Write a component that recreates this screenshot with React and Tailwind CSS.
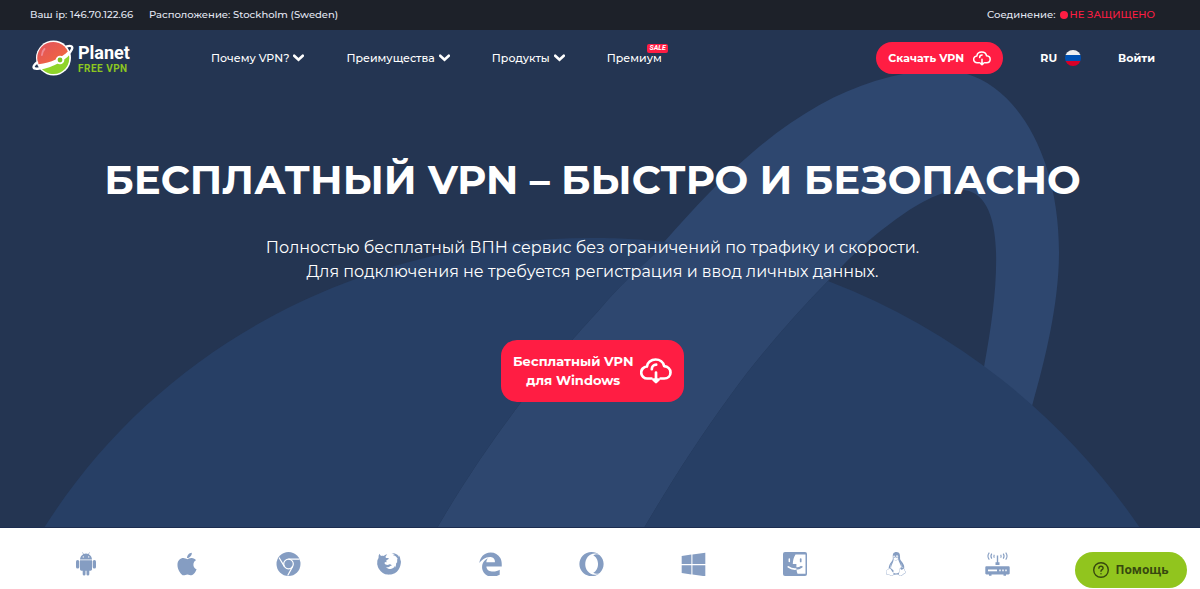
import React from 'react';
import { FaApple, FaEdgeLegacy, FaOpera, FaWindows, FaLinux } from 'react-icons/fa';
import { ImFirefox } from 'react-icons/im';

const menu = [
  { title: 'Почему VPN?', dropdown: true },
  { title: 'Преимущества', dropdown: true },
  { title: 'Продукты', dropdown: true },
  { title: 'Премиум', sale: true },
];

const Chevron = () => (
  <svg className="w-[11px] h-2" viewBox="0 0 11 8" fill="none" stroke="currentColor" strokeWidth="2.6" aria-hidden="true">
    <path d="M1.200 1.700 5.500 5.800 9.800 1.700" strokeLinecap="round" />
  </svg>
);

const CloudIcon = ({ className }) => (
  <svg className={className} viewBox="0 0 32 26" fill="none" stroke="currentColor" strokeWidth="2.7" strokeLinecap="round" strokeLinejoin="round" aria-hidden="true">
    <path d="M11.500 20.500H7.500a6 6 0 0 1-.6-12c.4-4 4.200-7 8.700-7 4.300 0 7.700 2.700 8.500 6.600 3.700.3 6.400 3 6.400 6.300 0 3.500-2.700 6.100-6.300 6.100H20.500" />
    <path d="M11.800 11.200c.1-2.600 1.900-4.500 4.400-4.500M16 14.500V22" />
    <path d="m13.400 21.600 2.600 2.500 2.600-2.500z" fill="currentColor" />
  </svg>
);

const LogoMark = () => (
  <svg className="w-[42px] h-[36px]" viewBox="0 0 42 36" aria-hidden="true">
    <defs>
      <linearGradient id="planetTop" x1="0" y1="0" x2="1" y2="1">
        <stop offset="0" stopColor="#e0525f" />
        <stop offset="1" stopColor="#f4693a" />
      </linearGradient>
    </defs>
    <circle cx="21.500" cy="18" r="17.500" fill="#fff" />
    <path d="M6.600 24.300A15.800 15.800 0 1 1 35.800 11.500C30 17.500 19 22.800 6.600 24.300z" fill="url(#planetTop)" />
    <path d="M9 28C19.500 26 30 21 36.800 14.500A15.800 15.800 0 0 1 9 28z" fill="#8fd42a" />
    <path d="M5 22.500C0 26.500.3 29.500 7 28.500 20 26.500 35.500 18.500 39.800 9.500c1.500-3.300-1-4.300-5-3.200" stroke="#fff" strokeWidth="2.400" fill="none" strokeLinecap="round" />
    <path d="M12.500 9c-1.500 1.500-2.500 3.500-2.600 6" stroke="#f08a93" strokeWidth="1.800" fill="none" strokeLinecap="round" />
    <circle cx="28" cy="20" r="4.300" fill="#fff" />
    <circle cx="28" cy="20" r="2.400" fill="#7cc421" />
  </svg>
);

const RussianFlag = () => (
  <span className="w-4 h-4 rounded-full overflow-hidden flex flex-col">
    <span className="flex-1 bg-[#f0f0f0]"></span>
    <span className="flex-1 bg-[#0052b4]"></span>
    <span className="flex-1 bg-[#d80027]"></span>
  </span>
);

const AndroidIcon = () => (
  <svg className="w-5 h-6" viewBox="0 0 20 24" fill="currentColor" aria-hidden="true">
    <path d="M4 7.500C4.200 5 5.400 3.300 7.200 2.300L6.200.6l.5-.3 1 1.700a7 7 0 0 1 4.600 0l1-1.700.5.3-1 1.700C14.600 3.300 15.800 5 16 7.500zM7.300 4.200a.7.7 0 1 0 0 1.400.7.7 0 0 0 0-1.400zm5.400 0a.7.7 0 1 0 0 1.400.7.7 0 0 0 0-1.400z" fillRule="evenodd" />
    <path d="M4 8.300h12v9c0 .8-.6 1.400-1.400 1.400h-1.300v3.500a1.400 1.400 0 0 1-2.800 0v-3.500h-1v3.500a1.400 1.400 0 0 1-2.800 0v-3.500H5.400c-.8 0-1.400-.6-1.400-1.400z" />
    <rect x="0" y="8" width="3.300" height="8.500" rx="1.600" />
    <rect x="16.700" y="8" width="3.300" height="8.500" rx="1.600" />
  </svg>
);

const ChromeIcon = () => (
  <svg className="w-[25px] h-6" viewBox="0 0 25 24" aria-hidden="true">
    <circle cx="12.500" cy="12" r="12" fill="currentColor" />
    <g fill="none" stroke="#fff" strokeWidth="1.200">
      <circle cx="12.500" cy="12" r="4.800" />
      <path d="M12.500 7.200h11M8.300 14.400 3 5.500M16.700 14.400 11.700 23.500" />
    </g>
  </svg>
);

const FinderIcon = () => (
  <svg className="w-6 h-6" viewBox="0 0 24 24" aria-hidden="true">
    <rect width="24" height="24" rx="2" fill="currentColor" />
    <path d="M12.500 2.500H22.500v19.200h-8c-.6-1.500-.9-3-1-4.700 2-.2 4-.9 5.300-2l-.7-1.300c-1.400 1-3 1.500-4.700 1.600V12h-3.600c.1-3.500.8-6.500 2.700-9.500z" fill="#fff" />
    <path d="M6.300 7v2.500" stroke="#fff" strokeWidth="1.500" strokeLinecap="round" />
    <path d="M17.700 7v2.500M12.500 17c2.300 0 4.600-.7 6.300-2.200" stroke="currentColor" strokeWidth="1.700" strokeLinecap="round" fill="none" />
    <path d="M5.300 14.800c2.200 1.700 4.800 2.400 7.500 2.200" stroke="#fff" strokeWidth="1.700" fill="none" strokeLinecap="round" />
  </svg>
);

const RouterIcon = () => (
  <svg className="w-[25px] h-6" viewBox="0 0 25 24" fill="none" stroke="currentColor" aria-hidden="true">
    <path d="M12.500 3.500v8" strokeWidth="1.400" />
    <path d="M9.300 2.700c-.6 1-.6 2 0 3M15.700 2.700c.6 1 .6 2 0 3M6.800 1.700c-1.100 1.500-1.100 3.500 0 5M18.200 1.700c1.100 1.500 1.100 3.500 0 5M4.300.7c-1.700 2.200-1.700 4.800 0 7M20.700.7c1.700 2.200 1.700 4.800 0 7" strokeWidth="1.100" />
    <path d="M10.500 10.200h4v2.800h-4zM.3 15.500c0-.7.5-1.200 1.200-1.200h22c.7 0 1.200.5 1.200 1.200v5.700c0 .7-.5 1.200-1.200 1.200h-22c-.7 0-1.200-.5-1.200-1.200zM4 22h2.500v1.800H4zM18.500 22H21v1.800h-2.500z" fill="currentColor" stroke="none" />
    <path d="M3 18.400h9" stroke="#fff" strokeWidth="1.800" />
    <path d="M15 17.500v1.800M18 17.500v1.800M21 17.500v1.800" stroke="#fff" strokeWidth="1.400" />
  </svg>
);

const platforms = [
  { name: 'Android', icon: <AndroidIcon /> },
  { name: 'iOS', icon: <FaApple size={26} /> },
  { name: 'Chrome', icon: <ChromeIcon /> },
  { name: 'Firefox', icon: <ImFirefox size={24} /> },
  { name: 'Edge', icon: <FaEdgeLegacy size={25} /> },
  { name: 'Opera', icon: <FaOpera size={25} /> },
  { name: 'Windows', icon: <FaWindows size={27} /> },
  { name: 'macOS', icon: <FinderIcon /> },
  { name: 'Linux', icon: <FaLinux size={24} /> },
  { name: 'Router', icon: <RouterIcon /> },
];

const TopBar = () => (
  <div className="bg-[#1d2129] text-[#e4e8f4] h-[30px] pl-[30px] pr-[45px] flex items-center justify-between text-[10px] leading-4 font-medium">
    <div className="flex gap-4">
      <span>Ваш ip: 146.70.122.66</span>
      <span>Расположение: Stockholm (Sweden)</span>
    </div>
    <div className="flex items-center">
      <span>Соединение:</span>
      <span className="w-2 h-2 rounded-full bg-[#ff1d43] ml-1 mr-0.5"></span>
      <span className="text-[#ff1d43]">НЕ ЗАЩИЩЕНО</span>
    </div>
  </div>
);

const Header = () => (
  <header className="relative flex items-center pl-8 pr-[45px] h-14">
    <a href="#" className="flex items-center gap-1 w-[179px] shrink-0">
      <LogoMark />
      <span className="flex flex-col font-['Roboto',sans-serif] font-bold">
        <span className="text-[18px] leading-[21px]">Planet</span>
        <span className="text-[10px] leading-3 tracking-wider text-[#8cc720]">FREE VPN</span>
      </span>
    </a>

    <nav className="flex items-center gap-[42px] text-[11px] leading-4 font-medium">
      {menu.map((item) => (
        <a key={item.title} href="#" className="relative flex items-center gap-1 whitespace-nowrap">
          {item.title}
          {item.dropdown && <Chevron />}
          {item.sale && (
            <span className="absolute -top-1.5 -right-1.5 bg-[#ff1d43] rounded-xs px-0.5 font-['Roboto',sans-serif] text-[7px] leading-[9px] font-bold italic">SALE</span>
          )}
        </a>
      ))}
    </nav>

    <div className="ml-auto flex items-center text-[11px] leading-4 font-bold whitespace-nowrap">
      <button className="flex items-center justify-between w-[127px] h-8 px-3 rounded-full bg-[#ff1d43]">
        Скачать VPN
        <CloudIcon className="w-[18px] h-[15px]" />
      </button>
      <button className="flex items-center gap-2 ml-[37px]">
        RU
        <RussianFlag />
      </button>
      <a href="#" className="ml-[37px]">Войти</a>
    </div>
  </header>
);

const PlanetBackground = () => (
  <svg className="absolute inset-0 w-full h-full" viewBox="0 30 1200 498" preserveAspectRatio="xMidYMax slice" aria-hidden="true">
    <path
      d="M437 529C499 422 566 347 600 310C618 288 640 269 665 242C695 208 722 179 753 153C795 117 836 94 875 82C910 71 942 69 967 75C1018 90 1059 158 1059 253C1059 303 1046 358 1032 407L984 368C992 325 997 287 996 253C995 215 984 191 961 191C941 191 916 205 891 224C869 240 849 259 828 282C795 316 762 353 730 397C700 438 671 483 644 529Z"
      fill="#2e476f"
    />
    <path d="M44 529C160 345 365 239 592 239C626 239 645 241 668 243C640 269 618 288 600 310C566 347 499 422 437 529Z" fill="#273f65" />
    <path d="M828 282A664 664 0 0 1 1140 529H644C671 483 700 438 730 397C762 353 795 316 828 282Z" fill="#273f65" />
  </svg>
);

export default function App() {
  return (
    <div className="bg-white font-['Montserrat','Inter',sans-serif]">
      <TopBar />

      <main>
        <div className="relative bg-[#243552] text-white pb-[125px] border-b border-[#1c2d50]">
          <PlanetBackground />
          <Header />
          <section className="relative flex flex-col items-center text-center pl-[30px] pr-[45px]">
            <h1 className="mt-[70px] text-[40px] leading-12 font-bold">БЕСПЛАТНЫЙ VPN – БЫСТРО И БЕЗОПАСНО</h1>
            <p className="mt-8 text-[16px] leading-6">
              Полностью бесплатный ВПН сервис без ограничений по трафику и скорости.
              <br />
              Для подключения не требуется регистрация и ввод личных данных.
            </p>
            <button className="mt-14 flex items-center justify-between w-[183px] h-[62px] px-3 rounded-2xl bg-[#ff1d43] text-[13px] leading-[19px] font-bold">
              <span>
                Бесплатный VPN
                <br />
                для Windows
              </span>
              <CloudIcon className="w-8 h-[26px]" />
            </button>
          </section>
        </div>

        <div className="grid grid-cols-11 pl-[35px] pr-[51px] pt-6 text-[#859dc2]">
          {platforms.map((p) => (
            <a key={p.name} href="#" aria-label={p.name} className="flex h-6 items-center justify-center">
              {p.icon}
            </a>
          ))}
        </div>
      </main>

      <button className="fixed right-[13px] bottom-px flex items-center justify-center gap-1.5 w-28 h-9 rounded-full bg-[#91c51e] text-[#37480f] text-[12px] leading-4 font-bold font-['Open_Sans',sans-serif]">
        <svg className="w-4 h-4" viewBox="0 0 16 16" fill="none" stroke="currentColor" strokeWidth="1.4" strokeLinecap="round" aria-hidden="true">
          <circle cx="8" cy="8" r="7.300" />
          <path d="M5.900 6.300c0-1.200.9-2 2.100-2s2.100.8 2.100 1.900c0 1.400-2.100 1.500-2.100 3.100M8 11.600v.1" />
        </svg>
        Помощь
      </button>
    </div>
  );
}
